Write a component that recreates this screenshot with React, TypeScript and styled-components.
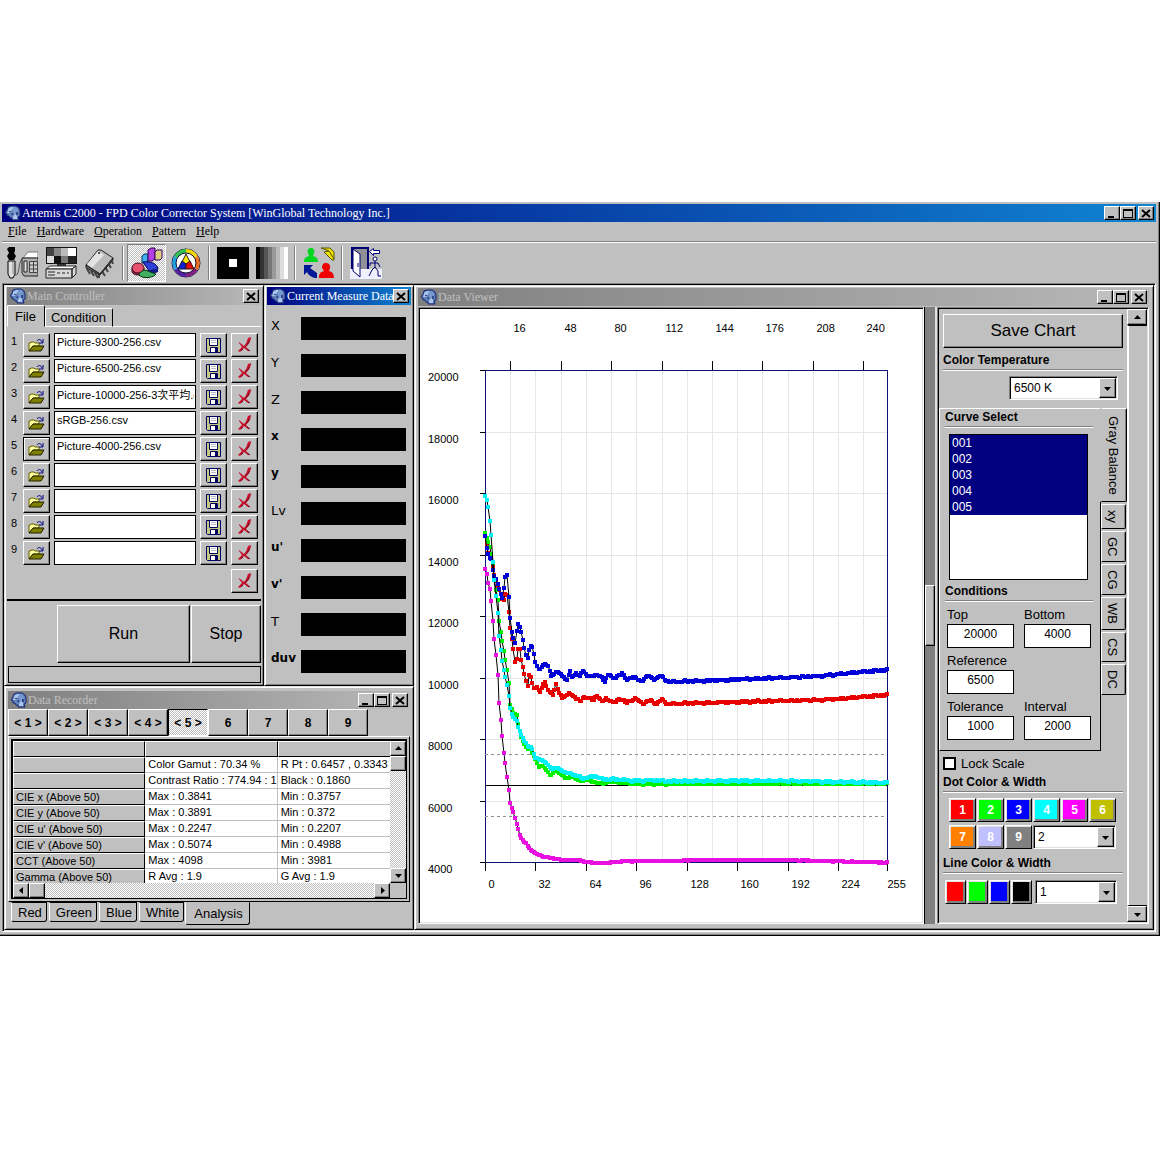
import React from "react";
import styled, { createGlobalStyle, css } from "styled-components";

const FACE = "#c0c0c0";
const SHADE = "#808080";
const SANS = `"Liberation Sans", "Noto Sans CJK TC", sans-serif`;
const SERIF = `"Liberation Serif", "Noto Sans CJK TC", serif`;

const GlobalStyle = createGlobalStyle`
  * { box-sizing: border-box; }
  body { margin: 0; background: #fff; color: #000; font: 11px ${SANS}; }
  button, input, select { font: inherit; color: inherit; margin: 0; padding: 0; border: 0; border-radius: 0; outline: 0; }
  button { background: ${FACE}; }
  svg { display: block; flex: none; }
`;

const raised = css`
  border: 1px solid;
  border-color: #fff #000 #000 #fff;
  box-shadow: inset -1px -1px ${SHADE};
`;
const sunken = css`
  border: 1px solid;
  border-color: ${SHADE} #fff #fff ${SHADE};
  box-shadow: inset 1px 1px #000, inset -1px -1px #dfdfdf;
`;
const dither = css`
  background: conic-gradient(#fff 25%, ${FACE} 0 50%, #fff 0 75%, ${FACE} 0) 0 0 / 2px 2px;
`;

/* ---------- shell ---------- */

const Page = styled.div`
  padding: 202px 2px 0 0;
  min-width: 1040px;
`;
const Shell = styled.main`
  background: ${FACE};
  border-right: 1px solid #000;
  border-bottom: 1px solid #000;
  box-shadow: inset -1px -1px ${SHADE};
  padding: 2px 3px 3px 2px;
`;
const MenuBar = styled.nav`
  display: flex;
  gap: 10px;
  height: 20px;
  padding: 0 6px;
  border-bottom: 1px solid ${SHADE};
  font: 12px ${SERIF};
`;
const MenuItem = styled.button`
  &::first-letter { text-decoration: underline; }
`;
const Toolbar = styled.div`
  display: flex;
  align-items: center;
  height: 41px;
  border-top: 1px solid #fff;
`;
const ToolButton = styled.button<{ $on?: boolean }>`
  width: 39px;
  height: 38px;
  display: grid;
  place-items: center;
  ${(p) => p.$on && dither}
  ${(p) => p.$on && css`border: 1px solid; border-color: ${SHADE} #fff #fff ${SHADE};`}
`;
const ToolDivider = styled.span`
  width: 2px;
  height: 34px;
  margin: 0 3px;
  border-left: 1px solid ${SHADE};
  border-right: 1px solid #fff;
`;
const Workspace = styled.div`
  display: grid;
  grid-template-columns: 410px 1fr;
  ${sunken}
  padding: 1px;
`;
const LeftColumn = styled.div`
  display: flex;
  flex-direction: column;
`;
const Row = styled.div`
  display: flex;
`;

/* ---------- windows ---------- */

const Frame = styled.section<{ $pad: string; $width?: string }>`
  display: flex;
  flex-direction: column;
  width: ${(p) => p.$width ?? "auto"};
  min-width: 0;
  background: ${FACE};
  border: 1px solid;
  border-color: #dfdfdf #000 #000 #dfdfdf;
  box-shadow: inset 1px 1px #fff, inset -1px -1px ${SHADE};
  padding: ${(p) => p.$pad};
`;
const TitleBar = styled.header<{ $active?: boolean }>`
  display: flex;
  align-items: center;
  gap: 1px;
  height: 18px;
  padding: 0 2px;
  font: 12px/18px ${SERIF};
  white-space: nowrap;
  color: ${(p) => (p.$active ? "#fff" : FACE)};
  background: linear-gradient(90deg, ${(p) => (p.$active ? "#000080, #1084d0" : "#808080, #b8b8b8")});
`;
const TitleText = styled.h2`
  flex: 1;
  min-width: 0;
  margin: 0;
  font: inherit;
`;
const CaptionButtons = styled.div`
  display: flex;
  flex: none;
  & > :last-child:not(:first-child) { margin-left: 2px; }
`;
const CaptionButton = styled.button`
  ${raised}
  width: 16px;
  height: 14px;
  color: #000;
  display: grid;
  place-items: center;
`;

function HeadIcon() {
  return (
    <svg width="17" height="16" viewBox="0 0 17 16">
      <path d="M4 2 7 1h5l3 2 1 3v5l-2 1 1 3H8v-2H6l-1-2H3v-2L1 8l2-3z" fill="#6080b8" stroke="#182878" />
      <path d="M4 4 7 2h3L8 5 6 8H3l1-2z" fill="#a8c4e8" />
      <path d="M9 2h3l2 3-1 4-2 1-2-3z" fill="#7898d0" />
      <path d="M9 12l2-3 2 2v3H9z" fill="#b0c8ec" />
      <path d="M5 6h2v1H5zM8 8h1v2H7zM12 7h2v3h-2z" fill="#304890" />
    </svg>
  );
}

type Caption = "min" | "max" | "close";
const captionPaths: Record<Caption, React.ReactNode> = {
  min: <path d="M2 8h6v2H2z" />,
  max: <path d="M1 1h10v9H1zM2 3v6h8V3z" fillRule="evenodd" />,
  close: <path d="M2 2l8 7M10 2L2 9" stroke="#000" strokeWidth="2" />,
};

function Title({ text, active, buttons }: { text: string; active?: boolean; buttons: Caption[] }) {
  return (
    <TitleBar $active={active}>
      <HeadIcon />
      <TitleText>{text}</TitleText>
      <CaptionButtons>
        {buttons.map((b) => (
          <CaptionButton key={b} type="button" aria-label={b}>
            <svg width="12" height="11" viewBox="0 0 12 11">{captionPaths[b]}</svg>
          </CaptionButton>
        ))}
      </CaptionButtons>
    </TitleBar>
  );
}

/* ---------- shared controls ---------- */

const Push = styled.button<{ $size?: string; $default?: boolean; $w?: string; $h?: string }>`
  ${raised}
  width: ${(p) => p.$w ?? "auto"};
  height: ${(p) => p.$h ?? "24px"};
  font-size: ${(p) => p.$size ?? "11px"};
  display: grid;
  place-items: center;
  ${(p) => p.$default && css`border-color: #000; box-shadow: inset 1px 1px #fff, inset -1px -1px ${SHADE};`}
`;
const ArrowBox = styled.span`
  grid-area: 1 / 1;
  justify-self: end;
  width: 17px;
  margin: 2px;
  display: grid;
  place-items: center;
  background: ${FACE};
  pointer-events: none;
  ${raised}
`;
const ComboFrame = styled.label<{ $span?: number; $w?: string }>`
  display: grid;
  height: 24px;
  width: ${(p) => p.$w ?? "auto"};
  grid-column: ${(p) => (p.$span ? `span ${p.$span}` : "auto")};
  font-size: 12px;
`;
const ComboSelect = styled.select`
  grid-area: 1 / 1;
  appearance: none;
  width: 100%;
  padding: 0 4px;
  background: #fff;
  ${sunken}
`;

type Dir = "up" | "down" | "left" | "right";
const arrowPaths: Record<Dir, string> = {
  up: "M1 6h7L4.5 2z",
  down: "M1 3h7L4.5 7z",
  left: "M6 1v7L2 4.5z",
  right: "M3 1v7l4-3.5z",
};
const Arrow = ({ dir }: { dir: Dir }) => (
  <svg width="9" height="9" viewBox="0 0 9 9"><path d={arrowPaths[dir]} /></svg>
);

function Combo({ label, value, span, w }: { label: string; value: string; span?: number; w?: string }) {
  return (
    <ComboFrame $span={span} $w={w}>
      <ComboSelect aria-label={label} defaultValue={value}>
        <option>{value}</option>
      </ComboSelect>
      <ArrowBox><Arrow dir="down" /></ArrowBox>
    </ComboFrame>
  );
}

/* ---------- main controller ---------- */

const TopTabs = styled.div`
  display: flex;
  align-items: flex-end;
  height: 22px;
  font-size: 13px;
  &::after { content: ""; flex: 1; border-bottom: 1px solid #fff; }
`;
const TopTab = styled.button<{ $on?: boolean }>`
  height: ${(p) => (p.$on ? "22px" : "19px")};
  padding: ${(p) => (p.$on ? "0 8px 0 7px" : "0 6px 0 5px")};
  border: 1px solid;
  border-color: #fff #000 ${(p) => (p.$on ? FACE : "#fff")} #fff;
  border-radius: 2px 2px 0 0;
`;
const FileList = styled.div`
  display: flex;
  flex-direction: column;
  gap: 2px;
  padding: 6px 3px 6px 4px;
  border-bottom: 2px solid #000;
`;
const FileRow = styled.div`
  display: grid;
  grid-template-columns: 8px 27px 1fr 27px 27px;
  column-gap: 4px;
`;
const RowNumber = styled.label`
  line-height: 16px;
`;
const FileInput = styled.input`
  min-width: 0;
  height: 24px;
  border: 1px solid #000;
  background: #fff;
  padding: 0 1px 6px 2px;
`;
const ClearAll = styled.div`
  display: flex;
  justify-content: flex-end;
  padding-top: 2px;
`;
const RunRow = styled.div`
  display: grid;
  grid-template-columns: 1fr 70px;
  gap: 1px;
  padding: 4px 0 3px 50px;
`;
const StatusBox = styled.div`
  height: 17px;
  margin: 0 0 0 1px;
  border: 1px solid #000;
`;

const OpenIcon = () => (
  <svg width="17" height="15" viewBox="0 0 17 15">
    <path d="M1 5h1l1-1h3l1 1h4v3H5l-4 5z" fill="#ffffa0" stroke="#606000" />
    <path d="M5 8h11l-3 5H1z" fill="#808000" stroke="#202000" />
    <path d="M9 3c1-2 4-2 5 1M15 1v4h-4" fill="none" stroke="#000080" />
  </svg>
);
const DiskIcon = () => (
  <svg width="15" height="15" viewBox="0 0 15 15">
    <path d="M0.5 0.5h14v14h-13l-1-1z" fill="#c8c880" stroke="#000060" />
    <path d="M3.5 0.5h8v7h-8zM4.5 9.5h7v5h-7z" fill="#fff" stroke="#000060" />
    <path d="M5 2h5v1H5zM5 4h5v1H5z" fill="#b8b8c8" />
    <path d="M9 10h2v4H9z" fill="#000060" />
  </svg>
);
const CrossIcon = () => (
  <svg width="16" height="16" viewBox="0 0 16 16">
    <path d="M2 5l5 4c2-2 3-5 4-8l3-1c0 4-2 7-5 10l4 4h-2l-4-3-4 4-2-1 4-4-3-4z" fill="#c8102c" />
    <path d="M12 4c-1 3-2 4-4 6M10 12l3 2M4 14l2-2" stroke="#701020" fill="none" />
  </svg>
);

const files = ["Picture-9300-256.csv", "Picture-6500-256.csv", "Picture-10000-256-3次平均.csv", "sRGB-256.csv", "Picture-4000-256.csv", "", "", "", ""];

function MainController() {
  return (
    <Frame $pad="1px 2px 2px" $width="260px">
      <Title text="Main Controller" buttons={["close"]} />
      <TopTabs role="tablist">
        <TopTab type="button" role="tab" $on>File</TopTab>
        <TopTab type="button" role="tab">Condition</TopTab>
      </TopTabs>
      <FileList>
        {files.map((name, i) => (
          <FileRow key={i}>
            <RowNumber htmlFor={`file-${i}`}>{i + 1}</RowNumber>
            <Push type="button" aria-label="Open" $default={i === 4}><OpenIcon /></Push>
            <FileInput id={`file-${i}`} defaultValue={name} />
            <Push type="button" aria-label="Save"><DiskIcon /></Push>
            <Push type="button" aria-label="Clear"><CrossIcon /></Push>
          </FileRow>
        ))}
        <ClearAll><Push type="button" aria-label="Clear all" $w="27px"><CrossIcon /></Push></ClearAll>
      </FileList>
      <RunRow>
        <Push type="button" $size="16px" $h="58px">Run</Push>
        <Push type="button" $size="16px" $h="58px">Stop</Push>
      </RunRow>
      <StatusBox role="status" />
    </Frame>
  );
}

/* ---------- current measure data ---------- */

const Readings = styled.dl`
  margin: 0;
  padding: 12px 5px 9px 4px;
  display: grid;
  gap: 14px;
`;
const Reading = styled.div`
  display: grid;
  grid-template-columns: 30px 1fr;
  height: 23px;
`;
const ReadingName = styled.dt<{ $bold: boolean }>`
  font: ${(p) => (p.$bold ? "bold 12px" : "normal 13px")}/17px "DejaVu Sans", sans-serif;
`;
const ReadingValue = styled.dd`
  margin: 0;
  background: #000;
`;
const readings = ["X", "Y", "Z", "x", "y", "Lv", "u'", "v'", "T", "duv"];

function MeasureData() {
  return (
    <Frame $pad="1px 2px 2px" $width="150px">
      <Title text="Current Measure Data" active buttons={["close"]} />
      <Readings>
        {readings.map((r) => (
          <Reading key={r}>
            <ReadingName $bold={r !== r.toUpperCase() && r !== "Lv"}>{r}</ReadingName>
            <ReadingValue />
          </Reading>
        ))}
      </Readings>
    </Frame>
  );
}

/* ---------- data recorder ---------- */

const SlotButton = styled.button<{ $on?: boolean }>`
  width: 40px;
  height: 27px;
  font: bold 12px ${SANS};
  ${raised}
  ${(p) => p.$on && dither}
  ${(p) => p.$on && css`border-color: #000 #fff #fff #000; box-shadow: none;`}
`;
const SheetPage = styled.div`
  border: 1px solid;
  border-color: #fff #000 #000 #fff;
  padding: 2px;
`;
const SheetFrame = styled.div`
  border: 2px solid #000;
  border-right-width: 1px;
  border-bottom-width: 1px;
  display: grid;
  grid-template-columns: 1fr 16px;
  grid-template-rows: 142px 15px;
`;
const SheetView = styled.div`
  overflow: hidden;
  background: #fff;
`;
const Sheet = styled.table`
  width: 397px;
  table-layout: fixed;
  border-spacing: 0;
  font-size: 11px;
`;
const HeadCell = styled.th`
  height: 16px;
  padding: 0 2px;
  line-height: 14px;
  text-align: left;
  font-weight: normal;
  white-space: nowrap;
  background: ${FACE};
  border: 1px solid;
  border-color: #fff #000 #000 #fff;
`;
const Cell = styled.td`
  height: 16px;
  padding: 0 0 0 3px;
  line-height: 15px;
  white-space: nowrap;
  border-right: 1px solid ${FACE};
  border-bottom: 1px solid ${FACE};
`;
const ScrollRail = styled.div<{ $across?: boolean }>`
  display: flex;
  flex-direction: ${(p) => (p.$across ? "row" : "column")};
  ${dither}
`;
const ScrollEnd = styled.button<{ $push?: boolean; $h?: string }>`
  ${raised}
  flex: none;
  width: 16px;
  height: ${(p) => p.$h ?? "15px"};
  display: grid;
  place-items: center;
  ${(p) => p.$push && css`margin: auto 0 0 auto;`}
`;
const SheetTabs = styled.div`
  display: flex;
  gap: 2px;
  padding-left: 3px;
  font-size: 13px;
`;
const SheetTab = styled.button<{ $on?: boolean }>`
  height: ${(p) => (p.$on ? "23px" : "20px")};
  padding: ${(p) => (p.$on ? "0 6px 0 8px" : "0 4px 0 6px")};
  margin-left: ${(p) => (p.$on ? "-1px" : "0")};
  border: 1px solid;
  border-color: ${(p) => (p.$on ? FACE : "#000")} #000 #000 #fff;
  border-radius: 0 0 3px 3px;
`;

const sheet = [
  ["", "Color Gamut : 70.34 %", "R Pt : 0.6457 , 0.3343"],
  ["", "Contrast Ratio : 774.94 : 1", "Black : 0.1860"],
  ["CIE x (Above 50)", "Max : 0.3841", "Min : 0.3757"],
  ["CIE y (Above 50)", "Max : 0.3891", "Min : 0.372"],
  ["CIE u' (Above 50)", "Max : 0.2247", "Min : 0.2207"],
  ["CIE v' (Above 50)", "Max : 0.5074", "Min : 0.4988"],
  ["CCT (Above 50)", "Max : 4098", "Min : 3981"],
  ["Gamma (Above 50)", "R Avg : 1.9", "G Avg : 1.9"],
];

function DataRecorder() {
  return (
    <Frame $pad="4px 3px 4px">
      <Title text="Data Recorder" buttons={["min", "max", "close"]} />
      <Row>
        {[1, 2, 3, 4, 5, 6, 7, 8, 9].map((n) => (
          <SlotButton key={n} type="button" $on={n === 5}>{n < 6 ? `< ${n} >` : n}</SlotButton>
        ))}
      </Row>
      <SheetPage>
        <SheetFrame>
          <SheetView>
            <Sheet>
              <thead><tr><HeadCell /><HeadCell /><HeadCell /></tr></thead>
              <tbody>
                {sheet.map(([name, a, b], i) => (
                  <tr key={i}><HeadCell scope="row">{name}</HeadCell><Cell>{a}</Cell><Cell>{b}</Cell></tr>
                ))}
              </tbody>
            </Sheet>
          </SheetView>
          <ScrollRail>
            <ScrollEnd type="button" aria-label="Scroll up"><Arrow dir="up" /></ScrollEnd>
            <ScrollEnd type="button" aria-label="Vertical thumb" />
            <ScrollEnd type="button" aria-label="Scroll down" $push><Arrow dir="down" /></ScrollEnd>
          </ScrollRail>
          <ScrollRail $across>
            <ScrollEnd type="button" aria-label="Scroll left"><Arrow dir="left" /></ScrollEnd>
            <ScrollEnd type="button" aria-label="Horizontal thumb" />
            <ScrollEnd type="button" aria-label="Scroll right" $push><Arrow dir="right" /></ScrollEnd>
          </ScrollRail>
        </SheetFrame>
      </SheetPage>
      <SheetTabs role="tablist">
        {["Red", "Green", "Blue", "White", "Analysis"].map((t) => (
          <SheetTab key={t} type="button" role="tab" $on={t === "Analysis"}>{t}</SheetTab>
        ))}
      </SheetTabs>
    </Frame>
  );
}

/* ---------- chart ---------- */

const PLOT = { left: 65, top: 61, width: 402, height: 492 };

/* Trace anchors as x,y pairs, three units to a pixel, with the plot corner at (195, -330). */
const traces: { color: string; jitter: number; pts: string }[] = [
  { color: "#e80000", jitter: 3, pts: "195,165 205,222 215,235 220,270 226,295 235,325 245,350 250,366 254,350 260,332 264,372 268,422 272,455 278,492 283,527 287,570 292,508 300,508 304,543 311,573 317,598 325,628 328,576 335,603 344,630 350,618 360,638 374,603 385,632 400,645 408,610 415,635 428,655 445,640 465,652 480,665 490,650 520,660 530,645 545,665 560,655 580,670 600,655 620,668 645,655 670,670 690,662 710,672 725,660 745,672 840,669 1020,664 1200,660 1290,654 1401,645" },
  { color: "#00f000", jitter: 2, pts: "195,160 203,183 211,205 215,230 220,258 225,310 235,375 238,432 245,470 252,515 258,547 262,575 267,620 270,673 280,698 290,705 295,735 303,770 312,790 322,808 332,808 345,835 355,860 370,858 392,888 405,872 440,895 460,890 475,902 500,900 545,912 570,905 640,912 750,912 1401,911" },
  { color: "#0000d8", jitter: 3, pts: "195,168 200,205 207,233 215,238 220,282 226,290 235,318 245,350 250,360 253,298 261,283 266,352 270,408 276,462 286,492 292,428 302,445 310,488 319,530 324,537 328,507 335,491 341,520 347,550 358,570 372,552 384,558 394,588 410,575 425,585 440,602 450,570 455,590 470,580 477,592 487,570 508,592 530,582 555,604 565,580 580,598 606,578 620,600 640,590 662,604 685,588 700,598 722,588 745,605 840,603 1020,596 1200,588 1290,579 1401,570" },
  { color: "#00f0f8", jitter: 3, pts: "195,47 202,68 206,90 211,140 216,185 219,255 225,315 229,357 234,410 238,475 244,525 251,567 259,603 263,625 270,683 278,710 290,722 295,745 310,778 325,800 335,802 345,832 375,845 395,868 410,862 430,876 450,880 490,895 530,888 545,898 600,898 640,903 700,901 750,904 1020,902 1401,908" },
  { color: "#e810e0", jitter: 1, pts: "195,268 201,285 205,313 211,332 216,386 220,440 225,497 229,534 235,615 238,678 244,735 250,800 253,830 259,863 262,902 267,938 270,968 277,987 283,1005 287,1025 295,1050 300,1070 318,1090 330,1108 350,1122 370,1130 430,1140 475,1140 500,1147 560,1149 600,1144 750,1143 840,1140 1100,1140 1401,1148" },
];

function sample(pts: string, jitter: number) {
  const anchors = pts.split(" ").map((p) => p.split(",").map(Number));
  let k = 0;
  return Array.from({ length: 256 }, (_, i) => {
    const ux = 195 + (i * PLOT.width * 3) / 255;
    while (k < anchors.length - 2 && anchors[k + 1][0] < ux) k++;
    const [x0, y0] = anchors[k];
    const [x1, y1] = anchors[k + 1];
    const wobble = ux > 470 ? Math.sin(i * 1.3) * Math.cos(i * 0.47) * jitter : 0;
    const uy = y0 + ((y1 - y0) * (ux - x0)) / (x1 - x0) + wobble;
    return [Math.round(PLOT.left + (ux - 195) / 3), Math.round(PLOT.top + (uy + 330) / 3)];
  });
}

const ChartPane = styled.figure`
  flex: 1;
  min-width: 0;
  margin: 0;
  padding: 1px;
  background: #fff;
  ${sunken}
`;
const ChartText = styled.text`
  font: 11px ${SANS};
`;

function Chart() {
  const { left, top, width, height } = PLOT;
  const right = left + width;
  const bottom = top + height;
  const xAt = (v: number) => Math.round(left + (v * width) / 255) + 0.5;
  const yAt = (v: number) => Math.round(bottom - ((v - 4000) * height) / 16000) + 0.5;
  const cols = Array.from({ length: 15 }, (_, i) => (i + 1) * 16);
  const rows = Array.from({ length: 9 }, (_, i) => 4000 + i * 2000);
  return (
    <svg width="100%" height="613" role="img" aria-label="Gray balance chart">
      <g stroke="#e6e6e6">
        {cols.map((v) => <line key={v} x1={xAt(v)} x2={xAt(v)} y1={top} y2={bottom} />)}
        {rows.map((v) => <line key={v} x1={left} x2={right} y1={yAt(v)} y2={yAt(v)} />)}
      </g>
      <rect x={left + 0.5} y={top + 0.5} width={width} height={height} fill="none" stroke="#101070" />
      <g stroke="#909090" strokeDasharray="3 3">
        <line x1={left} x2={right} y1={yAt(7500)} y2={yAt(7500)} />
        <line x1={left} x2={right} y1={yAt(5500)} y2={yAt(5500)} />
      </g>
      <line x1={left} x2={right} y1={yAt(6500)} y2={yAt(6500)} stroke="#000" />
      <g stroke="#000">
        {rows.map((v) => <line key={v} x1={left - 5} x2={left} y1={yAt(v)} y2={yAt(v)} />)}
        {cols.map((v) => v % 32
          ? <line key={v} x1={xAt(v)} x2={xAt(v)} y1={top - 9} y2={top} />
          : <line key={v} x1={xAt(v)} x2={xAt(v)} y1={bottom} y2={bottom + 9} />)}
        <line x1={xAt(0)} x2={xAt(0)} y1={bottom} y2={bottom + 9} />
        <line x1={xAt(255)} x2={xAt(255)} y1={bottom} y2={bottom + 9} />
      </g>
      {rows.map((v) => <ChartText key={v} x={8} y={yAt(v) + 10}>{v}</ChartText>)}
      {cols.filter((v) => v % 32).map((v) => <ChartText key={v} x={xAt(v) + 3} y={23}>{v}</ChartText>)}
      {[0, ...cols.filter((v) => v % 32 === 0), 255].map((v) => (
        <ChartText key={v} x={xAt(v) + (v === 255 ? 0 : 3)} y={579}>{v}</ChartText>
      ))}
      {traces.map((t) => {
        const pts = sample(t.pts, t.jitter);
        return (
          <g key={t.color}>
            <polyline points={pts.map((p) => p.join(",")).join(" ")} fill="none" stroke="#000" />
            <path d={pts.map(([x, y]) => `M${x - 2} ${y - 2}h4v4h-4z`).join("")} fill={t.color} />
          </g>
        );
      })}
    </svg>
  );
}

/* ---------- data viewer ---------- */

const ViewerBody = styled.div`
  display: flex;
  margin-top: 1px;
`;
const Splitter = styled.div`
  flex: none;
  width: 13px;
  display: flex;
  align-items: center;
  background: ${SHADE};
  border-left: 1px solid #000;
  border-right: 2px solid #dfdfdf;
`;
const SplitHandle = styled.span`
  width: 10px;
  height: 61px;
  background: ${FACE};
  ${raised}
`;
const Options = styled.form`
  flex: none;
  display: grid;
  grid-template-columns: 188px 20px;
  ${sunken}
  padding: 1px;
`;
const OptionColumn = styled.div`
  padding-top: 5px;
`;
const OptionBlock = styled.div`
  padding: 0 4px;
`;
const Heading = styled.h3`
  margin: 0;
  font: bold 12px/17px ${SANS};
  border-bottom: 1px solid #fff;
  box-shadow: 0 -1px ${SHADE} inset;
  height: 19px;
`;
const ComboLine = styled.div`
  display: flex;
  justify-content: flex-end;
  padding: 5px 5px 8px;
`;
const TabArea = styled.div`
  display: grid;
  grid-template-columns: 162px 27px;
  margin-right: -1px;
`;
const TabPage = styled.div`
  padding: 0 7px 10px 5px;
  border: 1px solid;
  border-color: #fff #000 #000 #fff;
`;
const SideTabs = styled.div`
  display: flex;
  flex-direction: column;
  gap: 2px;
  align-items: flex-start;
`;
const SideTab = styled.button<{ $on?: boolean; $h: number }>`
  writing-mode: vertical-rl;
  width: ${(p) => (p.$on ? "27px" : "25px")};
  height: ${(p) => p.$h}px;
  font-size: 13px;
  text-align: center;
  border: 1px solid;
  border-color: #fff #000 #000 ${(p) => (p.$on ? FACE : "#fff")};
  border-left-width: ${(p) => (p.$on ? "2px" : "1px")};
  padding-right: 2px;
  margin-left: ${(p) => (p.$on ? "-1px" : "0")};
  border-radius: 0 2px 2px 0;
  box-shadow: inset -1px 0 ${SHADE};
`;
const CurveList = styled.select`
  display: block;
  width: 139px;
  height: 146px;
  margin: 6px 4px 3px;
  background: #fff;
  border: 1px solid #000;
  overflow: hidden;
  font-size: 12px;
`;
const CurveOption = styled.option`
  height: 16px;
  min-height: 16px;
  padding: 1px 2px 0;
  line-height: 15px;
  &:checked {
    background: #000080 linear-gradient(#000080, #000080);
    color: #fff;
    -webkit-text-fill-color: #fff;
  }
`;
const Conditions = styled.div`
  display: grid;
  grid-template-columns: 67px 67px;
  column-gap: 10px;
  padding-left: 2px;
`;
const Field = styled.label<{ $wide?: boolean }>`
  grid-column: ${(p) => (p.$wide ? "1 / 2" : "auto")};
  font-size: 13px;
  line-height: 16px;
  padding-top: 5px;
`;
const FieldInput = styled.input`
  display: block;
  width: 67px;
  height: 24px;
  margin-top: 1px;
  padding-bottom: 4px;
  border: 1px solid #000;
  background: #fff;
  text-align: center;
  font-size: 12px;
`;
const LockRow = styled.label`
  display: flex;
  align-items: center;
  gap: 5px;
  height: 23px;
  padding-top: 2px;
  font-size: 13px;
`;
const LockBox = styled.input`
  appearance: none;
  width: 13px;
  height: 13px;
  border: 2px solid #000;
  background: #fff;
`;
const DotGrid = styled.div`
  display: grid;
  grid-template-columns: repeat(6, 27px);
  gap: 3px 1px;
  padding: 5px 6px 6px;
`;
const LineRow = styled.div`
  display: flex;
  gap: 1px;
  padding: 6px 2px;
  & > :last-child { margin-left: 2px; }
`;
const Swatch = styled.button<{ $color: string; $w: string }>`
  width: ${(p) => p.$w};
  height: 24px;
  background: ${(p) => p.$color};
  color: #fff;
  font: bold 12px ${SANS};
  border: 1px solid;
  border-color: #fff #000 #000 #fff;
  box-shadow: inset 1px 1px #dfdfdf, inset -2px -2px ${SHADE};
`;
const SideRail = styled.div`
  display: flex;
  flex-direction: column;
`;
const RailEnd = styled.button`
  ${raised}
  width: 20px;
  height: 16px;
  display: grid;
  place-items: center;
`;
const RailTrack = styled.div`
  flex: 1;
  border-left: 2px solid #fff;
  border-top: 1px solid #000;
  border-bottom: 1px solid #000;
`;

const sideTabs: [string, number][] = [["Gray Balance", 94], ["xy", 25], ["GC", 31], ["CG", 31], ["WB", 33], ["CS", 30], ["DC", 31]];
const dots = ["#ff0000", "#00ff00", "#0000ff", "#00ffff", "#ff00ff", "#c0c000", "#ff8000", "#c0c0ff", "#808080"];

function DataViewer() {
  return (
    <Frame $pad="2px 4px 4px 3px">
      <Title text="Data Viewer" buttons={["min", "max", "close"]} />
      <ViewerBody>
        <ChartPane><Chart /></ChartPane>
        <Splitter><SplitHandle /></Splitter>
        <Options onSubmit={(e) => e.preventDefault()}>
          <OptionColumn>
            <OptionBlock>
              <Push type="button" $w="100%" $h="34px" $size="17px">Save Chart</Push>
              <Spacer />
              <Heading>Color Temperature</Heading>
              <ComboLine><Combo label="Color Temperature" value="6500 K" w="109px" /></ComboLine>
            </OptionBlock>
            <TabArea>
              <TabPage>
                <Heading>Curve Select</Heading>
                <CurveList multiple aria-label="Curve Select" defaultValue={["001", "002", "003", "004", "005"]}>
                  {["001", "002", "003", "004", "005"].map((c) => <CurveOption key={c} value={c}>{c}</CurveOption>)}
                </CurveList>
                <Heading>Conditions</Heading>
                <Conditions>
                  <Field>Top<FieldInput defaultValue="20000" /></Field>
                  <Field>Bottom<FieldInput defaultValue="4000" /></Field>
                  <Field $wide>Reference<FieldInput defaultValue="6500" /></Field>
                  <Field $wide>Tolerance<FieldInput defaultValue="1000" /></Field>
                  <Field>Interval<FieldInput defaultValue="2000" /></Field>
                </Conditions>
              </TabPage>
              <SideTabs role="tablist">
                {sideTabs.map(([t, h], i) => <SideTab key={t} type="button" role="tab" $on={i === 0} $h={h}>{t}</SideTab>)}
              </SideTabs>
            </TabArea>
            <OptionBlock>
              <LockRow><LockBox type="checkbox" />Lock Scale</LockRow>
              <Heading>Dot Color &amp; Width</Heading>
              <DotGrid>
                {dots.map((c, i) => <Swatch key={c} type="button" $color={c} $w="27px">{i + 1}</Swatch>)}
                <Combo label="Dot width" value="2" span={3} />
              </DotGrid>
              <Heading>Line Color &amp; Width</Heading>
              <LineRow>
                {["#ff0000", "#00ff00", "#0000ff", "#000000"].map((c) => (
                  <Swatch key={c} type="button" aria-label={`Line ${c}`} $color={c} $w="21px" />
                ))}
                <Combo label="Line width" value="1" w="82px" />
              </LineRow>
            </OptionBlock>
          </OptionColumn>
          <SideRail>
            <RailEnd type="button" aria-label="Scroll up"><Arrow dir="up" /></RailEnd>
            <RailTrack />
            <RailEnd type="button" aria-label="Scroll down"><Arrow dir="down" /></RailEnd>
          </SideRail>
        </Options>
      </ViewerBody>
    </Frame>
  );
}

const Spacer = styled.div`
  height: 4px;
`;

/* ---------- toolbar drawings ---------- */

const Glyph = ({ children }: { children: React.ReactNode }) => (
  <svg width="32" height="32" viewBox="0 0 32 32">{children}</svg>
);
const ProbeIcon = () => (
  <Glyph>
    <path d="M3 0h6v4l-1 2 2 3-2 4H3L1 9l2-3-2-4z" fill="#000" />
    <path d="M2 14h7v13l-2 4H4l-2-4z" fill="#e0e0e0" stroke="#000" />
    <path d="M7 15v12" stroke="#888" />
    <path d="M9 28c6 1 2-15 9-17" fill="none" stroke="#555" />
    <path d="M17 11l5-6h10v6z" fill="#fff" stroke="#777" />
    <path d="M16 11h16v18H18l-2-3z" fill="#b0b0b0" stroke="#222" />
    <path d="M18 14h3v11h-3z" fill="#e8e8e8" stroke="#222" />
    <path d="M23.5 14.5h8v11h-8zM23.5 18h8M23.5 22h8M27.5 14v12" fill="#ccc" stroke="#444" />
  </Glyph>
);
const ComputerIcon = () => (
  <Glyph>
    <rect x="1" y="0" width="31" height="17" fill="#111" />
    <path d="M2 1h7v8H2z" fill="#444" /><path d="M9 1h7v8H9z" fill="#888" /><path d="M16 1h7v8h-7z" fill="#bbb" /><path d="M23 1h8v8h-8z" fill="#fff" />
    <path d="M2 9h7v7H2z" fill="#ddd" /><path d="M9 9h7v7H9z" fill="#111" /><path d="M16 9h7v7h-7z" fill="#777" /><path d="M23 9h8v7h-8z" fill="#222" />
    <path d="M12 17h9v3h-9z" fill="#333" />
    <path d="M1 22l4-3h26l-4 3z" fill="#fff" stroke="#333" />
    <path d="M1 22h26v9H1zM27 22l4-3v8l-4 4z" fill="#d8d8d8" stroke="#222" />
    <path d="M3 25h7M3 28h7M12 26h3M17 26h3M22 26h2" stroke="#222" />
  </Glyph>
);
const ChipIcon = () => (
  <Glyph>
    <path d="M3 22l3 5M7 24l3 5M11 26l3 5M15 27v4M18 24l3 5M21 20l3 5M24 16l3 5M27 12l2 5" stroke="#444" strokeWidth="2" />
    <path d="M2 18 14 3h3l12 8-13 16z" fill="#bbb" stroke="#222" />
    <path d="M3 17 14 4l6 4L8 21z" fill="#e4e4e4" />
    <path d="M2 18v3l14 7 13-15v-2L16 27z" fill="#666" stroke="#222" />
    <circle cx="15" cy="6" r="1" fill="#222" />
  </Glyph>
);
const ShapesIcon = () => (
  <Glyph>
    <path d="M11 9l2-2h4v7l-2 2h-4z" fill="#40b0f0" stroke="#003060" />
    <path d="M17 3l3-2h4v11l-3 2h-4z" fill="#b040e0" stroke="#300050" />
    <path d="M24 5l2-2h5v8l-2 2h-5z" fill="#d8d080" stroke="#400060" />
    <path d="M1 21v4c2 4 9 4 12 0v-4z" fill="#902040" stroke="#401020" />
    <ellipse cx="7" cy="21" rx="6" ry="5" fill="#e85070" stroke="#401020" />
    <path d="M12 15c7-1 14 1 15 7l-9 2z" fill="#3040d8" stroke="#000050" />
    <path d="M18 24l9-2v3l-8 3z" fill="#101890" />
    <path d="M14 23l11 4c-2 4-14 5-17 1 0-2 2-4 6-5z" fill="#40b060" stroke="#003010" />
  </Glyph>
);
const WheelIcon = () => (
  <Glyph>
    <circle cx="16" cy="16" r="14" fill="#fff" stroke="#101030" strokeWidth="1" />
    <g fill="none" strokeWidth="4">
      <path d="M16 4a12 12 0 0 1 10 6" stroke="#f0d800" />
      <path d="M26 10a12 12 0 0 1 0 12" stroke="#f07020" />
      <path d="M26 22a12 12 0 0 1-10 6" stroke="#802080" />
      <path d="M16 28a12 12 0 0 1-10-6" stroke="#5020a0" />
      <path d="M6 22a12 12 0 0 1 0-12" stroke="#20a0e0" />
      <path d="M6 10a12 12 0 0 1 10-6" stroke="#30c050" />
    </g>
    <circle cx="16" cy="16" r="10" fill="#fff" stroke="#101030" />
    <path d="M16 7l4 8-4 3-4-3z" fill="#ffe800" stroke="#202020" />
    <path d="M12 14l4 3v5H8z" fill="#1020d0" stroke="#101040" />
    <path d="M20 14l-4 3v5h8z" fill="#e01010" stroke="#401010" />
  </Glyph>
);
const WindowIcon = () => (
  <Glyph><path d="M0 0h32v32H0z" /><path d="M12 12h8v8h-8z" fill="#fff" /></Glyph>
);
const RampIcon = () => (
  <Glyph>
    {["#000", "#333", "#555", "#777", "#999", "#bbb", "#ddd", "#fff"].map((c, i) => (
      <rect key={c} x={i * 4} y="0" width="4" height="32" fill={c} />
    ))}
  </Glyph>
);
const SwapIcon = () => (
  <Glyph>
    <path d="M8 1c3 0 4 3 3 5l-1 3c4 1 5 3 5 6H1c0-3 1-5 5-6L5 6c-1-3 0-5 3-5z" fill="#00d820" />
    <path d="M23 16c3 0 5 3 4 5l-1 3c4 1 5 4 5 7H16c0-4 1-6 5-7l-2-3c0-3 1-5 4-5z" fill="#f00000" />
    <path d="M18 1h9l4 4v8h-2l-8-8 5-1z" fill="#f0e000" stroke="#555500" />
    <path d="M26 4l5 8" stroke="#555500" />
    <path d="M1 18h9l-3 3 7 5v5c-4 0-8-2-10-6l-3 3z" fill="#001898" />
  </Glyph>
);
const ExitIcon = () => (
  <Glyph>
    <path d="M0 22h32v10H0z" fill="#f0f0ff" />
    <path d="M2 22V1h16v21" fill="#909098" stroke="#000070" strokeWidth="2" />
    <path d="M3 2l7 5v23l-7-6z" fill="#fff" stroke="#000070" />
    <path d="M8 16v4" stroke="#000070" />
    <path d="M19.5 4.5l4-3v2h6v3h-6v2z" fill="#fff" stroke="#000070" />
    <circle cx="25" cy="12" r="2" fill="#fff" stroke="#000070" />
    <path d="M25 14v6l-3 3-3 6M25 20l3 4v5h3M20 19v-3h8l2 4" fill="none" stroke="#000070" />
  </Glyph>
);

export default function App() {
  return (
    <>
      <GlobalStyle />
      <Page>
        <Shell>
          <Title text="Artemis C2000 - FPD Color Corrector System [WinGlobal Technology Inc.]" active buttons={["min", "max", "close"]} />
          <MenuBar>
            {["File", "Hardware", "Operation", "Pattern", "Help"].map((m) => <MenuItem key={m} type="button">{m}</MenuItem>)}
          </MenuBar>
          <Toolbar role="toolbar">
            <ToolButton type="button" aria-label="Probe"><ProbeIcon /></ToolButton>
            <ToolButton type="button" aria-label="Display"><ComputerIcon /></ToolButton>
            <ToolButton type="button" aria-label="Chip"><ChipIcon /></ToolButton>
            <ToolDivider />
            <ToolButton type="button" aria-label="Analysis" $on><ShapesIcon /></ToolButton>
            <ToolButton type="button" aria-label="Color wheel"><WheelIcon /></ToolButton>
            <ToolDivider />
            <ToolButton type="button" aria-label="Window pattern"><WindowIcon /></ToolButton>
            <ToolButton type="button" aria-label="Gray ramp"><RampIcon /></ToolButton>
            <ToolDivider />
            <ToolButton type="button" aria-label="Switch user"><SwapIcon /></ToolButton>
            <ToolDivider />
            <ToolButton type="button" aria-label="Exit"><ExitIcon /></ToolButton>
          </Toolbar>
          <Workspace>
            <LeftColumn>
              <Row><MainController /><MeasureData /></Row>
              <DataRecorder />
            </LeftColumn>
            <DataViewer />
          </Workspace>
        </Shell>
      </Page>
    </>
  );
}
